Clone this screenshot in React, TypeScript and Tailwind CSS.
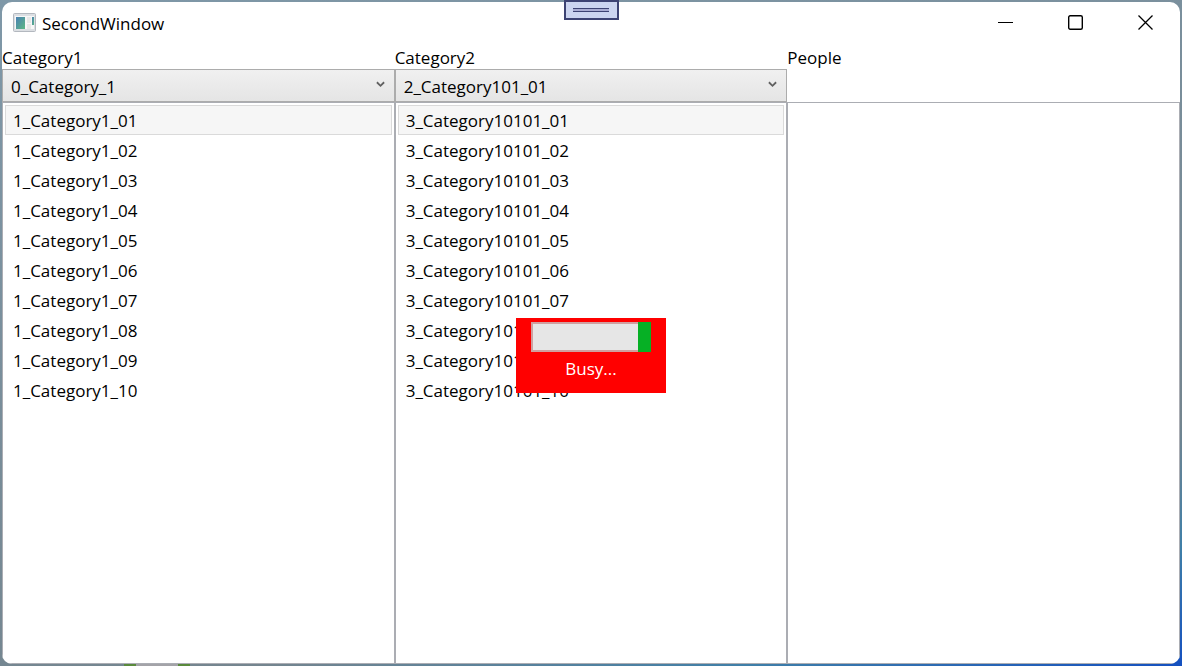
import { useState } from 'react';

interface ComboProps {
  id: string;
  label: string;
  options: string[];
}

interface ItemListProps {
  label: string;
  items: string[];
}

const rows = ['01', '02', '03', '04', '05', '06', '07', '08', '09', '10'];
const category1Items = rows.map((row) => `1_Category1_${row}`);
const category2Items = rows.map((row) => `3_Category10101_${row}`);

function Combo({ id, label, options }: ComboProps) {
  return (
    <div>
      <label htmlFor={id} className="block h-[23px] leading-6">
        {label}
      </label>
      <div className="relative">
        <select
          id={id}
          className="block w-full h-[33px] pt-[2px] pl-2 pr-7 appearance-none border border-[#acacac] bg-linear-to-b from-[#f0f0f0] to-[#e5e5e5] outline-none"
        >
          {options.map((option) => (
            <option key={option}>{option}</option>
          ))}
        </select>
        <svg
          viewBox="0 0 10 7"
          className="absolute right-[10px] top-3 w-[9px] h-[7px] pointer-events-none"
          fill="none"
          stroke="#606060"
          strokeWidth="2"
        >
          <path d="M1 1l4 4 4-4" />
        </svg>
      </div>
    </div>
  );
}

function ItemList({ label, items }: ItemListProps) {
  const [selected, setSelected] = useState(0);

  return (
    <ul
      role="listbox"
      aria-label={label}
      className="flex-1 min-h-0 overflow-hidden border border-[#abadb3] p-[2px]"
    >
      {items.map((item, idx) => (
        <li
          key={item}
          role="option"
          aria-selected={idx === selected}
          onClick={() => setSelected(idx)}
          className={`h-[30px] px-[7px] border leading-[30px] ${
            idx === selected ? 'bg-[#f6f6f6] border-[#dadada]' : 'border-transparent'
          }`}
        >
          {item}
        </li>
      ))}
    </ul>
  );
}

function TitleBar() {
  return (
    <header className="flex items-center h-11 pl-[11px] shrink-0">
      {/* App icon */}
      <svg viewBox="0 0 23 19" className="w-[23px] h-[19px] -mt-1" aria-hidden="true">
        <defs>
          <linearGradient id="pane" x1="0" y1="0" x2="1" y2="1">
            <stop offset="0" stopColor="#4a80b4" />
            <stop offset="1" stopColor="#5cb883" />
          </linearGradient>
        </defs>
        <rect x="0.5" y="0.5" width="22" height="18" rx="1" fill="#dcdfe3" stroke="#b3b8bf" />
        <rect x="2" y="3" width="19" height="13" fill="#f7f7f7" />
        <rect x="3" y="4" width="9" height="12" fill="url(#pane)" />
        <rect x="14" y="4" width="4" height="6" fill="#e8e8e8" />
        <rect x="14" y="11" width="4" height="5" fill="#e8e8e8" />
        <rect x="19" y="4" width="2" height="8" fill="url(#pane)" />
      </svg>
      <h1 className="ml-[6px]">SecondWindow</h1>

      {/* Caption buttons */}
      <div className="flex ml-auto h-full -mt-1">
        <button aria-label="Minimize" className="flex items-center justify-center w-[70px]">
          <svg viewBox="0 0 15 15" className="w-[15px] h-[15px]" stroke="#000">
            <path d="M0 7.5h15" />
          </svg>
        </button>
        <button aria-label="Maximize" className="flex items-center justify-center w-[70px]">
          <svg viewBox="0 0 15 15" className="w-[15px] h-[15px]" fill="none" stroke="#000" strokeWidth="1.4">
            <rect x="0.7" y="0.7" width="13.6" height="13.6" rx="1.5" />
          </svg>
        </button>
        <button aria-label="Close" className="flex items-center justify-center w-[70px]">
          <svg viewBox="0 0 15 15" className="w-[15px] h-[15px]" stroke="#000" strokeWidth="1.3">
            <path d="M0.5 0.5l14 14M14.5 0.5l-14 14" />
          </svg>
        </button>
      </div>
    </header>
  );
}

export default function App() {
  return (
    <div className="relative h-screen p-[2px] bg-[linear-gradient(165deg,#7f98a8_0%,#74858f_75%,#3f7fa8_88%,#1450c0_100%)] text-[17px] text-black font-['Open_Sans','Noto_Sans',sans-serif]">
      {/* Desktop showing under the window edge */}
      <div className="absolute bottom-0 left-[124px] w-[66px] h-[3px] border-x-[12px] border-[#5a8a3c] bg-[#a3a3a8]" />

      <main className="relative flex flex-col h-full rounded-[10px] overflow-hidden bg-white">
        <TitleBar />

        <div className="relative grid grid-cols-3 flex-1 min-h-0">
          <section className="flex flex-col min-h-0">
            <Combo id="category1" label="Category1" options={['0_Category_1']} />
            <ItemList label="Category1 items" items={category1Items} />
          </section>
          <section className="flex flex-col min-h-0">
            <Combo id="category2" label="Category2" options={['2_Category101_01']} />
            <ItemList label="Category2 items" items={category2Items} />
          </section>
          <section className="flex flex-col min-h-0">
            <h2 className="h-14 leading-6">People</h2>
            <ItemList label="People" items={[]} />
          </section>

          {/* Busy overlay */}
          <div className="absolute inset-0 m-auto flex flex-col items-center w-[150px] h-[75px] pt-1 bg-[#ff0000] text-white">
            <div
              role="progressbar"
              aria-label="Busy"
              className="flex justify-end w-[120px] h-[30px] border-2 border-r-0 border-[#d0a0a0] bg-[#e6e6e6]"
            >
              <div className="w-[13px] -my-[2px] bg-[#06b025]" />
            </div>
            <p className="leading-[34px]">Busy...</p>
          </div>
        </div>
      </main>

      {/* Collapsed debug toolbar */}
      <button
        aria-label="Toolbar"
        className="absolute top-0 inset-x-0 mx-auto flex items-center justify-center w-[55px] h-5 border-2 border-[#3d4373] bg-[#ccd5f0]"
      >
        <span className="w-9 h-1 border-y border-[#3d4373] bg-[#a9acd2]" />
      </button>
    </div>
  );
}
